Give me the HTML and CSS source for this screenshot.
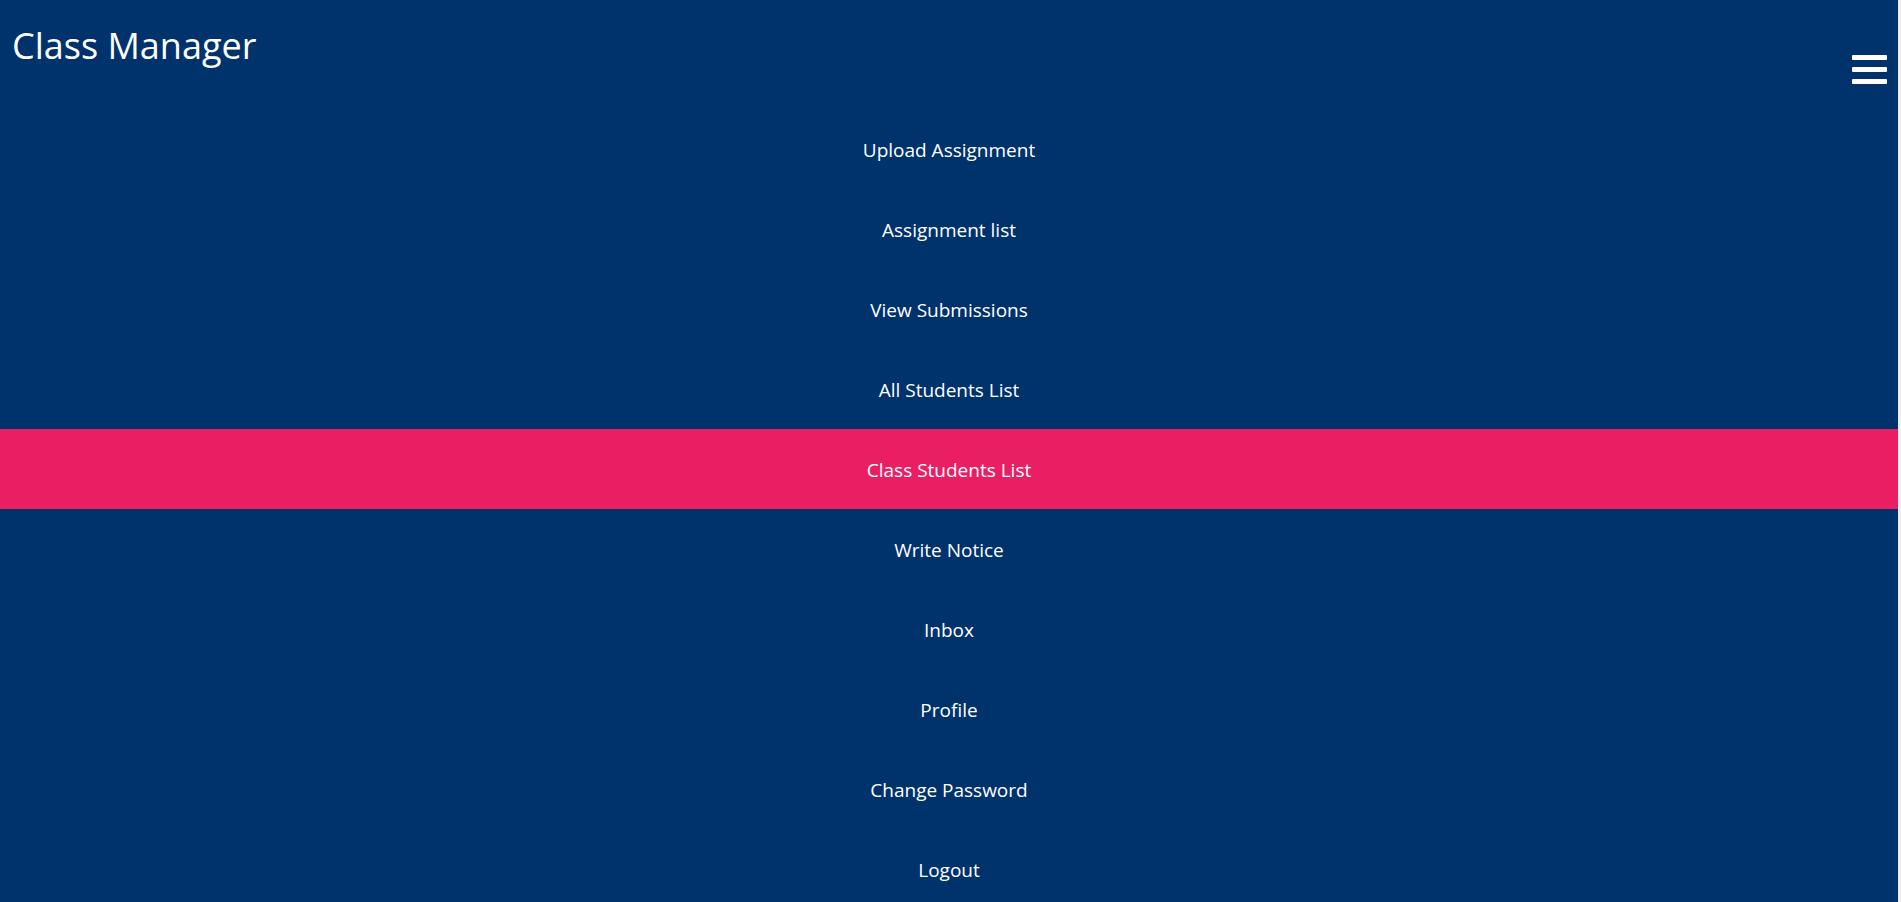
FILE: index.html
```html
<!DOCTYPE html>
<html lang="en">
<head>
<meta charset="utf-8">
<title>Class Manager</title>
<link rel="stylesheet" href="styles.css">
</head>
<body>
<div class="page">
  <header class="topbar">
    <div class="brand">Class Manager</div>
    <button class="burger" aria-label="Menu">
      <span></span><span></span><span></span>
    </button>
  </header>
  <nav class="menu">
    <a class="item" href="#">Upload Assignment</a>
    <a class="item" href="#">Assignment list</a>
    <a class="item" href="#">View Submissions</a>
    <a class="item" href="#">All Students List</a>
    <a class="item active" href="#">Class Students List</a>
    <a class="item" href="#">Write Notice</a>
    <a class="item" href="#">Inbox</a>
    <a class="item" href="#">Profile</a>
    <a class="item" href="#">Change Password</a>
    <a class="item" href="#">Logout</a>
  </nav>
</div>
</body>
</html>
```
FILE: styles.css
```css
html {
  overflow: hidden;
  background: #f0f0f0;
}
body {
  margin: 0;
  background: #f0f0f0;
  font-family: "Open Sans", "Noto Sans", sans-serif;
}
.page {
  margin-right: 3px;
  background: #00326c;
  color: #ffffff;
}
.topbar {
  height: 109px;
  display: flex;
  justify-content: space-between;
  align-items: flex-start;
}
.brand {
  padding: 21px 0 0 12px;
  font-size: 36px;
  line-height: 49px;
}
.burger {
  margin: 55px 11px 0 0;
  padding: 0;
  border: 0;
  background: none;
  width: 35px;
  display: flex;
  flex-direction: column;
  gap: 7px;
}
.burger span {
  display: block;
  height: 5px;
  background: #ffffff;
  border-radius: 1px;
}
.menu {
  display: flex;
  flex-direction: column;
}
.item {
  display: block;
  height: 80px;
  line-height: 82px;
  text-align: center;
  color: #ffffff;
  text-decoration: none;
  font-size: 19px;
}
.item.active {
  background: #e91e63;
}
```
